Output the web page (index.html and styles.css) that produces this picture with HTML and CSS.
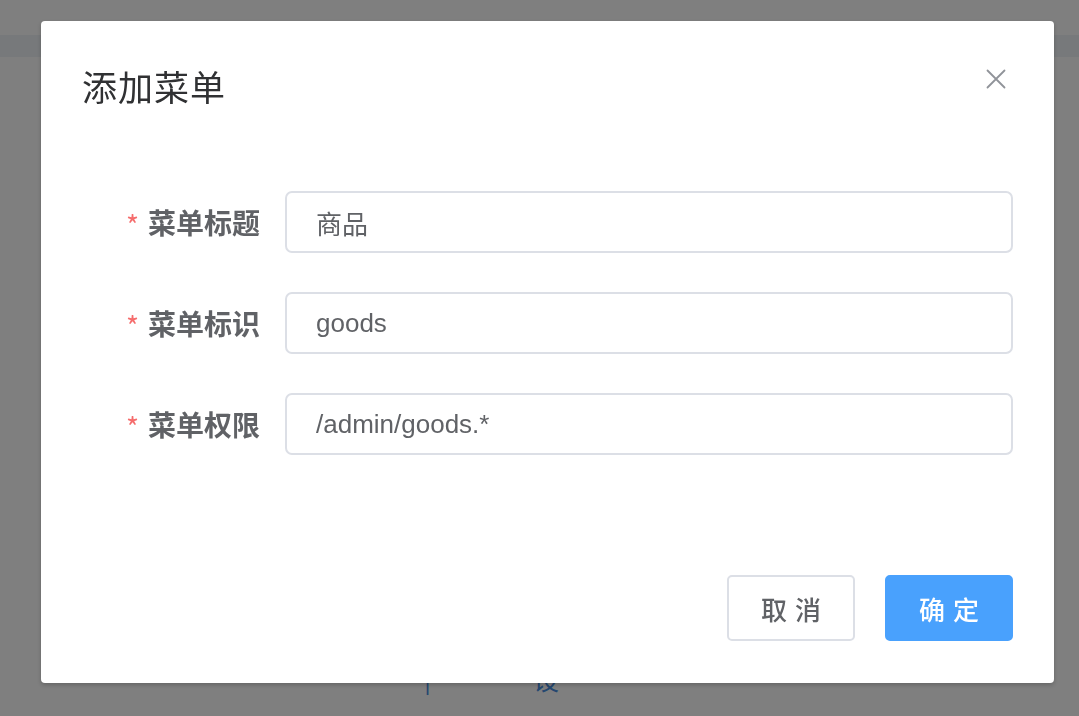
FILE: index.html
```html
<!DOCTYPE html>
<html lang="zh-CN">
<head>
<meta charset="utf-8">
<title>菜单管理</title>
<link rel="stylesheet" href="styles.css">
</head>
<body>
<div class="page">
  <div class="page-top"></div>
  <div class="page-bar"></div>
  <div class="page-body">
    <div class="table-row">
      <span class="link link-a">|</span>
      <span class="link link-b">设</span>
    </div>
  </div>
</div>

<div class="mask"></div>

<div class="dialog" role="dialog">
  <div class="dialog-header">
    <span class="dialog-title">添加菜单</span>
    <button class="dialog-close" aria-label="关闭">
      <svg viewBox="0 0 20 20" width="20" height="20">
        <path d="M1.5 1.5 L18.5 18.5 M18.5 1.5 L1.5 18.5" stroke="#909399" stroke-width="1.8" fill="none" stroke-linecap="round"/>
      </svg>
    </button>
  </div>

  <form class="dialog-body">
    <div class="form-item">
      <label class="form-label"><span class="req">*</span>菜单标题</label>
      <div class="form-input"><input type="text" value="商品"></div>
    </div>
    <div class="form-item">
      <label class="form-label"><span class="req">*</span>菜单标识</label>
      <div class="form-input"><input type="text" value="goods"></div>
    </div>
    <div class="form-item">
      <label class="form-label"><span class="req">*</span>菜单权限</label>
      <div class="form-input"><input type="text" value="/admin/goods.*"></div>
    </div>
  </form>

  <div class="dialog-footer">
    <button class="btn">取 消</button>
    <button class="btn btn-primary">确 定</button>
  </div>
</div>
</body>
</html>
```

FILE: styles.css
```css
html, body {
  margin: 0;
  padding: 0;
  height: 100%;
  overflow: hidden;
  font-family: "Liberation Sans", "Noto Sans CJK SC", sans-serif;
}

/* page beneath the modal */
.page {
  background: #ffffff;
  height: 716px;
  display: flex;
  flex-direction: column;
}
.page-top {
  height: 35px;
  background: #ffffff;
}
.page-bar {
  height: 22px;
  background: #eef2f7;
}
.page-body {
  flex: 1;
  display: flex;
  flex-direction: column;
  justify-content: flex-end;
}
.table-row {
  height: 60px;
  position: relative;
}
.link {
  position: absolute;
  color: #4a8fe0;
  font-size: 26px;
  font-family: "Noto Sans CJK SC", sans-serif;
  line-height: 1;
}
.link-a { left: 424px; top: 8px; }
.link-b { left: 533px; top: 10px; }

/* modal mask */
.mask {
  position: fixed;
  inset: 0;
  background: rgba(0, 0, 0, 0.5);
}

/* dialog */
.dialog {
  position: absolute;
  left: 41px;
  top: 21px;
  width: 1013px;
  height: 662px;
  box-sizing: border-box;
  background: #ffffff;
  border-radius: 4px;
  box-shadow: 0 2px 4px rgba(0, 0, 0, 0.2);
  display: flex;
  flex-direction: column;
}

.dialog-header {
  padding: 42px 40px 0 41px;
  height: 46px;
  display: flex;
  align-items: center;
  justify-content: space-between;
}
.dialog-title {
  font-family: "Noto Sans CJK SC", sans-serif;
  font-size: 35px;
  line-height: 46px;
  color: #303133;
  letter-spacing: 1px;
}
.dialog-close {
  border: 0;
  background: transparent;
  padding: 0;
  width: 20px;
  height: 20px;
  margin-top: -14px;
  margin-right: 8px;
  cursor: pointer;
  display: flex;
}

.dialog-body {
  margin: 0;
  padding: 82px 41px 0 0;
  display: flex;
  flex-direction: column;
  gap: 39px;
}
.form-item {
  display: flex;
  align-items: center;
  height: 62px;
}
.form-label {
  width: 219px;
  padding-right: 25px;
  text-align: right;
  font-family: "Noto Sans CJK SC", sans-serif;
  font-size: 28px;
  font-weight: 700;
  color: #606266;
  line-height: 62px;
  flex-shrink: 0;
}
.req {
  color: #f56c6c;
  font-weight: 400;
  margin-right: 9px;
  font-size: 28px;
  position: relative;
  top: 2px;
}
.form-input {
  flex: 1;
  height: 100%;
}
.form-input input {
  width: 100%;
  height: 100%;
  box-sizing: border-box;
  border: 2px solid #dcdfe6;
  border-radius: 7px;
  padding: 0 29px;
  font-family: "Liberation Sans", "Noto Sans CJK SC", sans-serif;
  font-size: 26px;
  color: #606266;
  outline: none;
  background: #ffffff;
}

.dialog-footer {
  margin-top: auto;
  padding: 0 41px 42px 0;
  display: flex;
  justify-content: flex-end;
  gap: 30px;
}
.btn {
  width: 128px;
  height: 66px;
  box-sizing: border-box;
  border: 2px solid #dcdfe6;
  border-radius: 5px;
  background: #ffffff;
  color: #606266;
  font-family: "Noto Sans CJK SC", sans-serif;
  font-size: 26px;
  font-weight: 500;
  letter-spacing: 1px;
  cursor: pointer;
  padding: 0 0 0 1px;
}
.btn-primary {
  background: #49a1fd;
  border-color: #49a1fd;
  color: #ffffff;
}
```
